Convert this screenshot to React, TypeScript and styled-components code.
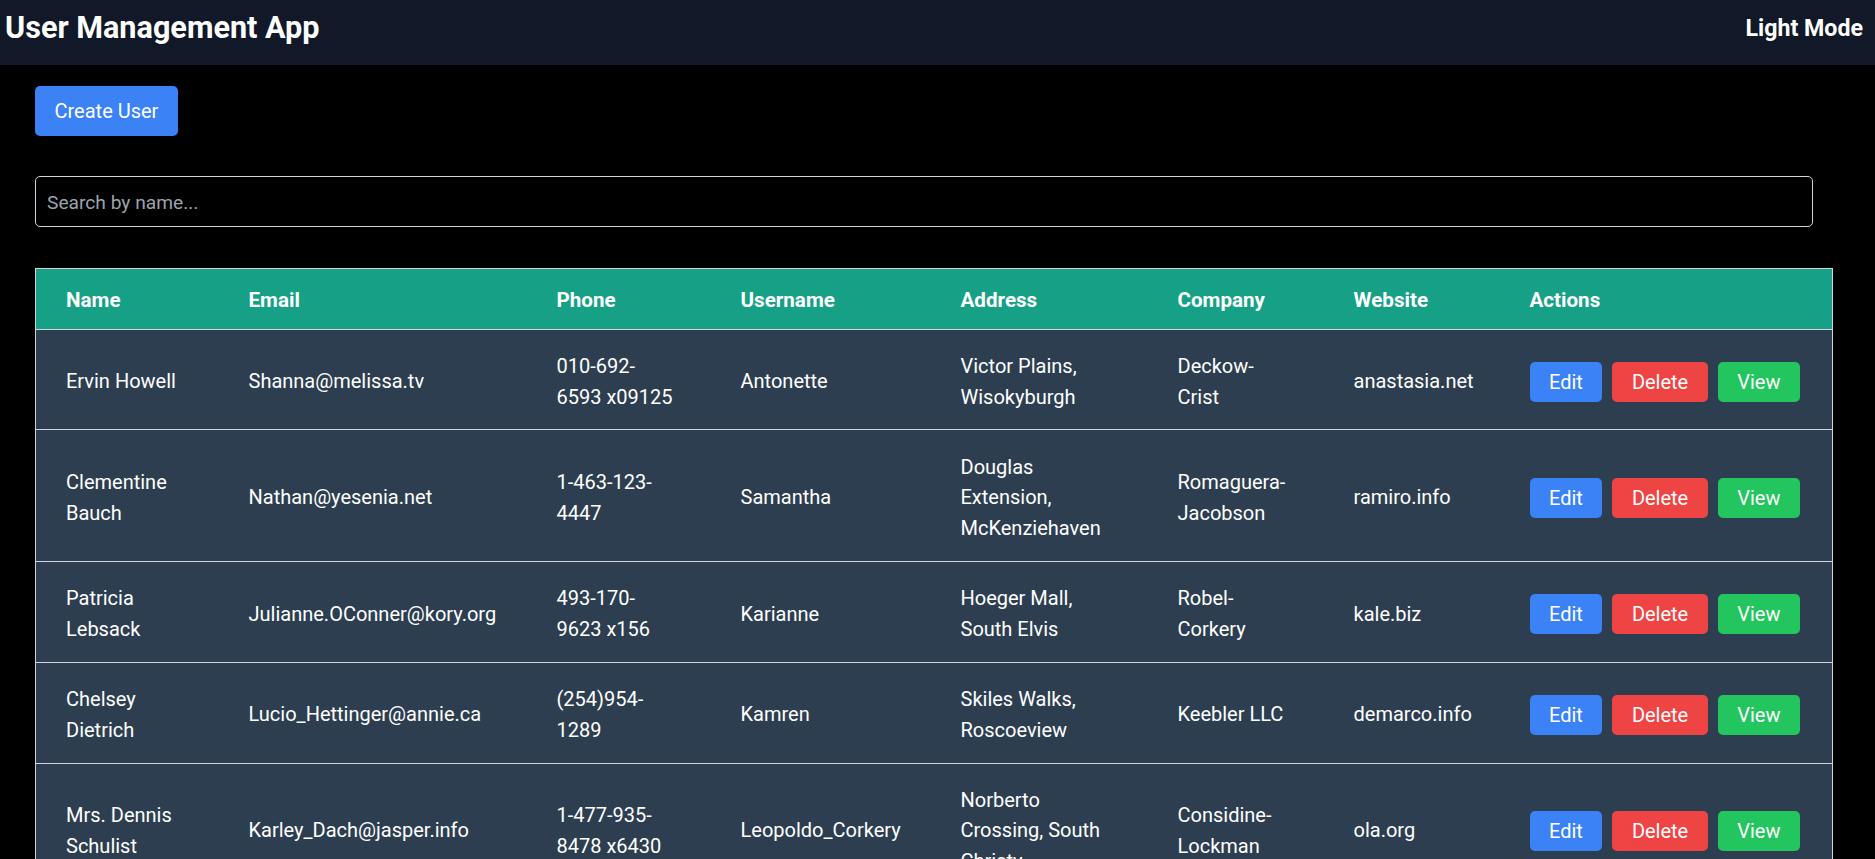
import React from "react";
import styled, { createGlobalStyle } from "styled-components";

const GlobalStyle = createGlobalStyle`
  html, body {
    margin: 0;
    padding: 0;
    background: #000;
    overflow: hidden;
  }
  body {
    font-family: Roboto, "Liberation Sans", Arial, sans-serif;
    color: #fff;
  }
  * { box-sizing: border-box; }
`;

type User = {
  name: string;
  email: string;
  phone: string;
  username: string;
  address: string;
  company: string;
  website: string;
};

const users: User[] = [
  { name: "Ervin Howell", email: "Shanna@melissa.tv", phone: "010-692-6593 x09125", username: "Antonette", address: "Victor Plains, Wisokyburgh", company: "Deckow-Crist", website: "anastasia.net" },
  { name: "Clementine Bauch", email: "Nathan@yesenia.net", phone: "1-463-123-4447", username: "Samantha", address: "Douglas Extension, McKenziehaven", company: "Romaguera-Jacobson", website: "ramiro.info" },
  { name: "Patricia Lebsack", email: "Julianne.OConner@kory.org", phone: "493-170-9623 x156", username: "Karianne", address: "Hoeger Mall, South Elvis", company: "Robel-Corkery", website: "kale.biz" },
  { name: "Chelsey Dietrich", email: "Lucio_Hettinger@annie.ca", phone: "(254)954-1289", username: "Kamren", address: "Skiles Walks, Roscoeview", company: "Keebler LLC", website: "demarco.info" },
  { name: "Mrs. Dennis Schulist", email: "Karley_Dach@jasper.info", phone: "1-477-935-8478 x6430", username: "Leopoldo_Corkery", address: "Norberto Crossing, South Christy", company: "Considine-Lockman", website: "ola.org" },
  { name: "Kurtis Weissnat", email: "Telly.Hoeger@billy.biz", phone: "210.067.6132", username: "Elwyn.Skiles", address: "Rex Trail, Howemouth", company: "Johns Group", website: "elvis.io" },
  { name: "Nicholas Runolfsdottir V", email: "Sherwood@rosamond.me", phone: "586.493.6943 x140", username: "Maxime_Nienow", address: "Ellsworth Summit, Aliyaview", company: "Abernathy Group", website: "jacynthe.com" },
  { name: "Glenna Reichert", email: "Chaim_McDermott@dana.io", phone: "(775)976-6794 x41206", username: "Delphine", address: "Dayna Park, Bartholomebury", company: "Yost and Sons", website: "conrad.com" },
  { name: "Clementina DuBuque", email: "Rey.Padberg@karina.biz", phone: "024-648-3804", username: "Moriah.Stanton", address: "Kattie Turnpike, Lebsackbury", company: "Hoeger LLC", website: "ambrose.net" },
];

type FieldKey = keyof User;

const columns: { label: string; width?: number; field?: FieldKey; textMax?: number }[] = [
  { label: "Name", width: 183, field: "name", textMax: 123 },
  { label: "Email", width: 308, field: "email", textMax: 248 },
  { label: "Phone", width: 184, field: "phone", textMax: 119 },
  { label: "Username", width: 220, field: "username", textMax: 160 },
  { label: "Address", width: 217, field: "address", textMax: 156 },
  { label: "Company", width: 176, field: "company", textMax: 110 },
  { label: "Website", width: 176, field: "website", textMax: 116 },
  { label: "Actions" },
];

const Page = styled.div`
  min-height: 100vh;
  background: #000;
`;

const TopBar = styled.header`
  height: 65px;
  background: #111827;
  display: flex;
  justify-content: space-between;
  align-items: flex-start;
  padding: 9px 12px 0 5px;
`;

const Title = styled.h1`
  margin: 0;
  font-size: 30.6px;
  line-height: 38.4px;
  font-weight: 700;
  color: #fff;
`;

const ModeToggle = styled.button`
  background: none;
  border: none;
  padding: 0;
  color: #fff;
  font-family: inherit;
  font-size: 23.2px;
  line-height: 38.4px;
  font-weight: 700;
  cursor: pointer;
`;

const Main = styled.main`
  padding: 21px 42px 0 35px;
  display: flex;
  flex-direction: column;
  align-items: stretch;
`;

const Toolbar = styled.div`
  display: flex;
`;

const Button = styled.button<{ $bg: string; $h: number }>`
  display: inline-flex;
  align-items: center;
  justify-content: center;
  height: ${(p) => p.$h}px;
  padding: 0 19.5px;
  border: none;
  border-radius: 5px;
  background: ${(p) => p.$bg};
  color: #fff;
  font-family: inherit;
  font-size: 20px;
  cursor: pointer;
  white-space: nowrap;
`;

const SearchInput = styled.input`
  margin-top: 40px;
  margin-right: 20px;
  height: 51px;
  padding: 1px 11px 0;
  background: transparent;
  border: 1px solid #d1d5db;
  border-radius: 5px;
  color: #fff;
  font-family: inherit;
  font-size: 19.2px;
  outline: none;
  &::placeholder {
    color: #9ca3af;
  }
`;

const Table = styled.table`
  margin-top: 41px;
  width: 1798px;
  border-collapse: collapse;
  table-layout: fixed;
  border: 1px solid #d1d5db;
`;

const Col = styled.col<{ $w?: number }>`
  width: ${(p) => (p.$w ? `${p.$w}px` : "auto")};
`;

const HeadCell = styled.th`
  background: #16a085;
  padding: 15.5px 30px 13.5px;
  line-height: 30.7px;
  font-size: 20.6px;
  font-weight: 700;
  text-align: left;
  color: #fff;
  border-bottom: 1px solid #d1d5db;
`;

const Cell = styled.td`
  background: #2c3e50;
  padding: 21.2px 30px 17.2px;
  line-height: 30.7px;
  font-size: 20px;
  color: #fff;
  vertical-align: middle;
  border-bottom: 1px solid #d1d5db;
`;

const CellText = styled.span<{ $max: number }>`
  display: block;
  max-width: ${(p) => p.$max}px;
`;

const Actions = styled.div`
  display: flex;
  gap: 10px;
`;

export default function App() {
  return (
    <Page>
      <GlobalStyle />
      <TopBar>
        <Title>User Management App</Title>
        <ModeToggle>Light Mode</ModeToggle>
      </TopBar>
      <Main>
        <Toolbar>
          <Button $bg="#3b82f6" $h={50}>Create User</Button>
        </Toolbar>
        <SearchInput placeholder="Search by name..." />
        <Table>
          <colgroup>
            {columns.map((c) => (
              <Col key={c.label} $w={c.width} />
            ))}
          </colgroup>
          <thead>
            <tr>
              {columns.map((c) => (
                <HeadCell key={c.label}>{c.label}</HeadCell>
              ))}
            </tr>
          </thead>
          <tbody>
            {users.map((u) => (
              <tr key={u.username}>
                {columns.map((c) =>
                  c.field ? (
                    <Cell key={c.label}>
                      <CellText $max={c.textMax ?? 200}>{u[c.field]}</CellText>
                    </Cell>
                  ) : (
                    <Cell key={c.label}>
                      <Actions>
                        <Button $bg="#3b82f6" $h={40}>Edit</Button>
                        <Button $bg="#ef4444" $h={40}>Delete</Button>
                        <Button $bg="#22c55e" $h={40}>View</Button>
                      </Actions>
                    </Cell>
                  )
                )}
              </tr>
            ))}
          </tbody>
        </Table>
      </Main>
    </Page>
  );
}
